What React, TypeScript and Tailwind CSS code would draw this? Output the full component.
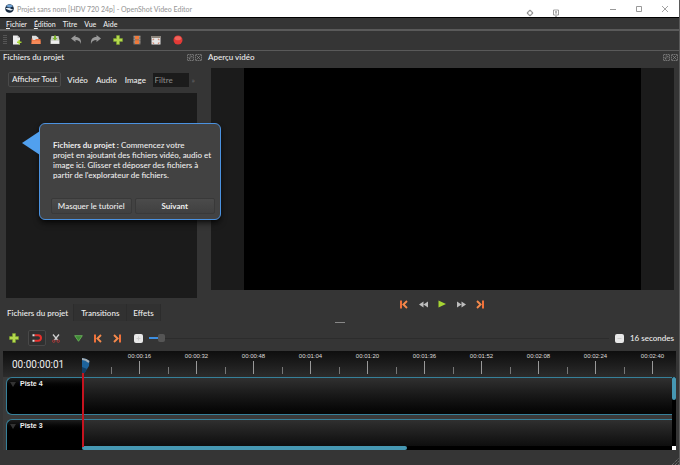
import { useState } from "react";
import type { ReactNode } from "react";

const times = [
  "00:00:16",
  "00:00:32",
  "00:00:48",
  "00:01:04",
  "00:01:20",
  "00:01:36",
  "00:01:52",
  "00:02:08",
  "00:02:24",
  "00:02:40",
];

const IconButton = ({ label, children }: { label: string; children: ReactNode }) => (
  <button type="button" aria-label={label} className="flex h-5 w-[19px] items-center justify-center">
    {children}
  </button>
);

const PlusIcon = () => (
  <svg className="size-[10px]" viewBox="0 0 10 10">
    <path d="M3.5 .5h3v3h3v3h-3v3h-3v-3h-3v-3h3z" fill="#b4d84c" stroke="#7ba52a" strokeWidth=".5" />
  </svg>
);

const StartIcon = () => (
  <svg className="h-[9px] w-2" viewBox="0 0 8 9">
    <path d="M0 .5h2v8H0z" fill="#f0713a" />
    <path d="M7 1 3.4 4.5 7 8" fill="none" stroke="#f58a4c" strokeWidth="1.9" />
  </svg>
);

const EndIcon = () => (
  <svg className="h-[9px] w-2" viewBox="0 0 8 9">
    <path d="M6 .5h2v8H6z" fill="#f0713a" />
    <path d="M1 1l3.6 3.5L1 8" fill="none" stroke="#f58a4c" strokeWidth="1.9" />
  </svg>
);

const DockButtons = () => (
  <div className="flex gap-px">
    <button type="button" aria-label="Détacher">
      <svg className="size-[7px]" viewBox="0 0 7 7" fill="none" stroke="#8c8c8c" strokeWidth=".7">
        <path d="M.5 .5h6v6h-6zM2 5l3-3M2.5 2H5v2.500M2 3v2h2" strokeDasharray="1.500 .5" />
      </svg>
    </button>
    <button type="button" aria-label="Fermer">
      <svg className="size-[7px]" viewBox="0 0 7 7" fill="none" stroke="#8c8c8c" strokeWidth=".7">
        <path d="M.5 .5h6v6h-6z" strokeDasharray="1.500 .5" />
        <path d="M1.500 1.500l4 4M5.500 1.500l-4 4" />
      </svg>
    </button>
  </div>
);

const TitleBar = () => (
  <header className="flex h-[17px] items-center bg-white pr-[10px] pl-[5px] text-[#999]">
    <svg className="size-[9px]" viewBox="0 0 9 9">
      <circle cx="4.500" cy="4.500" r="4.300" fill="#14283f" />
      <path d="M1 2.200A4.300 4.300 0 0 1 8 2.300L5 3.800z" fill="#6fa3d6" />
      <path d="M.3 4.600Q3 3 5.500 4.600T8.700 5.200Q6 7.200 3.500 6T.3 4.600" fill="#e9f1f8" />
    </svg>
    <h1 className="ml-[3px] text-[7px] leading-4">
      Projet sans nom [HDV 720 24p] - OpenShot Video Editor
    </h1>
    <div className="mt-2 mr-[49px] ml-auto flex gap-[18px]">
      <svg className="size-2" viewBox="0 0 8 8" fill="none" stroke="#777" strokeWidth=".9">
        <circle cx="4" cy="4" r="2.300" />
        <path d="M4 .8v1.400M4 5.800v1.400M.8 4h1.400M5.800 4h1.400" />
      </svg>
      <svg className="size-2" viewBox="0 0 8 8" fill="none" stroke="#888" strokeWidth=".8">
        <path d="M1.500 1h5v5h-5zM4 2v3M3 3h2M3 7.300h2" />
      </svg>
    </div>
    <div className="flex gap-[18px]">
      <button type="button" aria-label="Réduire">
        <svg className="size-2" viewBox="0 0 8 8" stroke="#999">
          <path d="M1 4.500h6" />
        </svg>
      </button>
      <button type="button" aria-label="Agrandir">
        <svg className="size-2" viewBox="0 0 8 8" fill="none" stroke="#999">
          <path d="M1.500 1.500h5v5h-5z" />
        </svg>
      </button>
      <button type="button" aria-label="Quitter">
        <svg className="size-2" viewBox="0 0 8 8" stroke="#999" strokeWidth=".9">
          <path d="M1 1l6 6M7 1 1 7" />
        </svg>
      </button>
    </div>
  </header>
);

const MenuBar = () => (
  <nav className="flex h-3 items-center gap-[7px] border-t border-black px-[6px] text-[7px]">
    <button type="button">
      <u>F</u>ichier
    </button>
    <button type="button">
      <u>É</u>dition
    </button>
    <button type="button">Titre</button>
    <button type="button">Vue</button>
    <button type="button">Aide</button>
  </nav>
);

const ToolBar = () => (
  <div className="flex h-[22px] items-center border-t-2 border-b border-[#5a5a5a] pb-[2px] pl-[3px]">
    <svg className="h-[10px] w-1" viewBox="0 0 4 10" stroke="#777" strokeDasharray="1 1">
      <path d="M1 0v10M3 0v10" />
    </svg>
    <IconButton label="Nouveau projet">
      <svg className="size-[10px]" viewBox="0 0 10 10">
        <path d="M1 .5h4.500L8 3v6.500H1z" fill="#eee" />
        <path d="M5.500 .5V3H8z" fill="#bbb" />
        <path d="M6.500 5v1.500H5V8h1.500v1.500H8V8h1.500V6.500H8V5z" fill="#a6d533" />
      </svg>
    </IconButton>
    <IconButton label="Ouvrir un projet">
      <svg className="size-[10px]" viewBox="0 0 10 10">
        <path d="M1 .8h4l2.500 2V8H1z" fill="#ddd" />
        <path d="M.5 9V3.500h1V5H4l1-1h4.500V9z" fill="#ef6c3b" />
        <path d="M1.200 5.500h8.300V9H.5z" fill="#f58a59" />
      </svg>
    </IconButton>
    <IconButton label="Enregistrer le projet">
      <svg className="size-[10px]" viewBox="0 0 10 10">
        <path d="M1.500 1h7l1 4.500V9h-9V5.500z" fill="#c9cdc4" />
        <path d="M1 5.800h8v2.700H1z" fill="#eee" />
        <path d="M4 .5h2V3h1.500L5 5.500 2.500 3H4z" fill="#7eb32c" />
      </svg>
    </IconButton>
    <div className="ml-[3px] flex">
      <IconButton label="Annuler">
        <svg className="h-[9px] w-[11px]" viewBox="0 0 11 9">
          <path d="M0 3.500 4.500 0v2C8.500 2 10.500 4.500 10 9 9 6 7.500 5 4.500 5v2z" fill="#9a9a9a" />
        </svg>
      </IconButton>
      <IconButton label="Rétablir">
        <svg className="h-[9px] w-[11px]" viewBox="0 0 11 9">
          <path d="M11 3.500 6.500 0v2C2.500 2 .5 4.500 1 9 2 6 3.500 5 6.500 5v2z" fill="#9a9a9a" />
        </svg>
      </IconButton>
    </div>
    <div className="ml-[3px] flex">
      <IconButton label="Importer des fichiers">
        <PlusIcon />
      </IconButton>
      <IconButton label="Choisir un profil">
        <svg className="size-[10px]" viewBox="0 0 10 10">
          <path d="M1.500 .5h7v9h-7z" fill="#77706a" />
          <path d="M3 1h4v3.500H3zM3 5.300h4v3.700H3z" fill="#f0793a" />
          <path d="M2.200 1v8M7.800 1v8" stroke="#ddd" strokeWidth=".6" strokeDasharray=".8 .8" />
        </svg>
      </IconButton>
      <IconButton label="Plein écran">
        <svg className="size-[10px]" viewBox="0 0 10 10">
          <path d="M.5 1h9v8.500h-9z" fill="#e6e6e6" />
          <path d="M.5 1h9v2h-9z" fill="#8d857b" />
          <path d="M2 5.300V4.200h1.200M6.800 4.200H8v1.100M8 7.200v1.200H6.800M3.200 8.400H2V7.200" fill="none" stroke="#c65b3b" strokeWidth=".7" />
        </svg>
      </IconButton>
    </div>
    <div className="ml-[3px]">
      <IconButton label="Exporter la vidéo">
        <svg className="size-[10px]" viewBox="0 0 10 10">
          <circle cx="5" cy="5" r="4.500" fill="#e33a36" />
          <ellipse cx="5" cy="3.200" rx="3.200" ry="2" fill="#f0645c" />
        </svg>
      </IconButton>
    </div>
  </div>
);

const Tutorial = ({ onHide }: { onHide: () => void }) => (
  <div
    role="dialog"
    aria-label="Tutoriel"
    className="absolute top-[72px] left-[39px] z-10 w-[182px] rounded-md border border-[#4b92e0] bg-[#424242] pt-4 pr-[5px] pb-[5px] pl-[11px] shadow-md shadow-black/60"
  >
    <svg className="absolute top-[7px] -left-[18px] h-6 w-[18px]" viewBox="0 0 18 24">
      <path d="M18 0v24L0 12z" fill="#51a0ee" />
    </svg>
    <p className="pl-[2px] leading-[10px]">
      <b>Fichiers du projet :</b> Commencez votre
      <br />
      projet en ajoutant des fichiers vidéo, audio et
      <br />
      image ici. Glisser et déposer des fichiers à
      <br />
      partir de l'explorateur de fichiers.
    </p>
    <div className="mt-[18px] flex gap-[3px]">
      <button
        type="button"
        onClick={onHide}
        className="h-4 flex-1 rounded-xs border border-[#393939] bg-linear-to-b from-[#4b4b4b] to-[#404040]"
      >
        Masquer le tutoriel
      </button>
      <button
        type="button"
        className="h-4 flex-1 rounded-xs border border-[#393939] bg-linear-to-b from-[#4b4b4b] to-[#404040] font-bold"
      >
        Suivant
      </button>
    </div>
  </div>
);

const ProjectFiles = () => {
  const [tutorial, setTutorial] = useState(true);

  return (
    <section className="relative flex w-[205px] shrink-0 flex-col">
      <div className="flex h-3 items-center justify-between pr-[3px] pl-[3px]">
        <h2>Fichiers du projet</h2>
        <DockButtons />
      </div>
      <div className="mt-2 flex h-[17px] items-center pl-2 whitespace-nowrap">
        <button type="button" className="h-[15px] rounded-xs border border-[#4a4a4a] px-[3px] leading-[13px]">
          Afficher Tout
        </button>
        <button type="button" className="ml-[6px]">
          Vidéo
        </button>
        <button type="button" className="ml-2">
          Audio
        </button>
        <button type="button" className="ml-2">
          Image
        </button>
        <input
          type="text"
          aria-label="Filtre"
          placeholder="Filtre"
          className="ml-auto h-[14px] w-9 bg-[#1b1b1b] px-[2px] placeholder:text-[#888]"
        />
        <span className="mr-[10px] ml-[3px] text-[#666]">»</span>
      </div>
      <div className="mt-[5px] mr-2 ml-[6px] flex-1 bg-[#1b1b1b]" />
      <div className="mt-[6px] flex h-[17px] pl-[2px]">
        <button type="button" className="border-r border-[#2c2c2c] px-[5px]">
          Fichiers du projet
        </button>
        <button type="button" className="border-r border-[#2c2c2c] bg-[#313131] px-[7px]">
          Transitions
        </button>
        <button type="button" className="border-r border-[#2c2c2c] bg-[#313131] px-[6px]">
          Effets
        </button>
      </div>
      {tutorial && <Tutorial onHide={() => setTutorial(false)} />}
    </section>
  );
};

const VideoPreview = () => (
  <section className="flex flex-1 flex-col">
    <div className="flex h-3 items-center justify-between pr-px pl-[3px]">
      <h2>Aperçu vidéo</h2>
      <DockButtons />
    </div>
    <div className="mt-[5px] mr-[5px] ml-[6px] flex-1 bg-[#1b1b1b] px-[33px]">
      <div className="h-full bg-black" />
    </div>
    <div className="flex h-[31px] items-center justify-center pb-[3px]">
      <IconButton label="Aller au début">
        <StartIcon />
      </IconButton>
      <IconButton label="Reculer">
        <svg className="h-[7px] w-[9px]" viewBox="0 0 9 7" fill="#bdbdbd">
          <path d="M4.500 .5v6L0 3.500zM9 .5v6L4.500 3.500z" />
        </svg>
      </IconButton>
      <IconButton label="Lecture">
        <svg className="size-2" viewBox="0 0 8 8" fill="#a6d533">
          <path d="M.5 .5 8 4 .5 7.500z" />
        </svg>
      </IconButton>
      <IconButton label="Avancer">
        <svg className="h-[7px] w-[9px]" viewBox="0 0 9 7" fill="#bdbdbd">
          <path d="M0 .5v6l4.500-3zM4.500 .5v6l4.500-3z" />
        </svg>
      </IconButton>
      <IconButton label="Aller à la fin">
        <EndIcon />
      </IconButton>
    </div>
  </section>
);

const TimelineTools = () => {
  const [zoom, setZoom] = useState(2);

  return (
    <div className="flex h-5 items-center pr-[5px] pl-1">
      <IconButton label="Ajouter une piste">
        <PlusIcon />
      </IconButton>
      <button
        type="button"
        aria-label="Aimanter"
        className="ml-[5px] flex h-4 w-[18px] items-center justify-center rounded-xs border border-[#484848] bg-[#303030]"
      >
        <svg className="h-2 w-[10px]" viewBox="0 0 10 8" fill="none" strokeWidth="2">
          <path d="M2.500 1.200h3.700a2.800 2.800 0 0 1 0 5.600H2.500" stroke="#e8302c" />
          <path d="M.5 1.200h2M.5 6.800h2" stroke="#ddd" />
        </svg>
      </button>
      <IconButton label="Rasoir">
        <svg className="h-[9px] w-2" viewBox="0 0 8 9" fill="none">
          <path d="M1 .5l4.500 5.500M7 .5 2.500 6" stroke="#d0d0d0" strokeWidth="1.300" />
          <circle cx="1.700" cy="7.200" r="1.200" stroke="#a93a3a" />
          <circle cx="6.300" cy="7.200" r="1.200" stroke="#a93a3a" />
        </svg>
      </IconButton>
      <div className="ml-1 flex">
        <IconButton label="Ajouter un marqueur">
          <svg className="h-[7px] w-[9px]" viewBox="0 0 9 7">
            <path d="M.7 .7h7.600L4.500 6.300z" fill="#3d8a35" stroke="#6bb15b" strokeWidth=".9" />
          </svg>
        </IconButton>
        <IconButton label="Marqueur précédent">
          <StartIcon />
        </IconButton>
        <IconButton label="Marqueur suivant">
          <EndIcon />
        </IconButton>
      </div>
      <button
        type="button"
        aria-label="Zoom avant"
        onClick={() => setZoom(zoom + 1)}
        className="ml-2 flex size-[9px] items-center justify-center rounded-xs bg-[#e8e8e8]"
      >
        <svg className="size-[7px]" viewBox="0 0 7 7" stroke="#ccc" fill="none">
          <path d="M3.500 1.500v4M1.500 3.500h4" />
        </svg>
      </button>
      <input
        type="range"
        aria-label="Zoom"
        min={0}
        max={100}
        value={zoom}
        onChange={(e) => setZoom(Number(e.target.value))}
        className="mx-[6px] h-2 min-w-0 flex-1 appearance-none bg-[linear-gradient(#3d8ee0,#3d8ee0),linear-gradient(#2c2c2c,#2c2c2c)] bg-[size:12px_2px,100%_1px] bg-[position:left_center,left_center] bg-no-repeat [&::-webkit-slider-thumb]:h-2 [&::-webkit-slider-thumb]:w-[7px] [&::-webkit-slider-thumb]:appearance-none [&::-webkit-slider-thumb]:rounded-xs [&::-webkit-slider-thumb]:bg-[#555]"
      />
      <button
        type="button"
        aria-label="Zoom arrière"
        onClick={() => setZoom(zoom - 1)}
        className="flex size-[9px] items-center justify-center rounded-xs bg-[#e8e8e8]"
      >
        <svg className="size-[7px]" viewBox="0 0 7 7" stroke="#ccc">
          <path d="M1.500 3.500h4" />
        </svg>
      </button>
      <span className="ml-[6px]">16 secondes</span>
    </div>
  );
};

const Track = ({ name }: { name: string }) => (
  <div className="flex h-[38px] shrink-0">
    <div className="flex w-[77px] items-start rounded-l-md border border-r-0 border-[#36809a] bg-linear-to-b from-[#1d1d1d] to-black to-35% pt-[2px] pl-[3px]">
      <svg className="mt-[2px] h-[5px] w-[6px]" viewBox="0 0 6 5" fill="#333">
        <path d="M0 0h6L3 5z" />
      </svg>
      <h3 className="ml-[4px] font-['Liberation_Sans',Arial,sans-serif] text-[7px] leading-[8px] font-bold">{name}</h3>
    </div>
    <div className="flex-1 border-y border-[#36809a] bg-linear-to-b from-[#303030] to-[#040404]" />
  </div>
);

const Timeline = () => (
  <section className="relative mx-[3px] mt-[3px] flex h-[99px] flex-col overflow-hidden bg-[#3a3a3a]">
    <div className="flex h-[26px] shrink-0 overflow-hidden bg-linear-to-b from-[#0e0e0e] to-[#2c2c2c] font-['Liberation_Sans',Arial,sans-serif]">
      <div className="w-[79px] shrink-0 pt-[3px] pl-[9px] font-[Roboto,sans-serif] text-[10px] leading-[22px] font-normal">
        00:00:00:01
      </div>
      <div className="flex pl-[29px]">
        {times.map((time) => (
          <div key={time} className="flex w-[57px] shrink-0 flex-col items-center">
            <span className="h-[10px] text-[6px] leading-[10px] text-[#ddd]">{time}</span>
            <div className="flex w-full items-end justify-between">
              <i className="h-[7px] w-px bg-[#777]" />
              <i className="h-[13px] w-px bg-[#999]" />
              <i className="w-px" />
            </div>
          </div>
        ))}
      </div>
    </div>
    <div className="flex flex-1 overflow-hidden">
      <div className="flex flex-1 flex-col gap-1 pl-[3px]">
        <Track name="Piste 4" />
        <Track name="Piste 3" />
      </div>
      <div className="flex w-[4px] flex-col justify-between bg-black">
        <div className="h-[23px] rounded-sm bg-[#4697b2]" />
        <div className="size-1 bg-white" />
      </div>
    </div>
    <div className="absolute right-1 bottom-0 left-[79px] h-1 bg-black">
      <div className="h-full w-[55%] rounded-sm bg-[#4697b2]" />
    </div>
    <svg className="absolute top-[7px] left-[79px] h-[90px] w-2" viewBox="0 0 8 90">
      <path d="M0 0Q5 .5 7.500 3L7 8 3 14 0 16z" fill="#1d639c" />
      <path d="M0 9 5 11 2 16H0z" fill="#123f66" />
      <path d="M0 0Q5 .5 7.500 3L6.500 5Q3.500 2 0 2z" fill="#a3adb5" />
      <path d="M0 15h2v74H0z" fill="#c5131f" />
    </svg>
  </section>
);

const App = () => {
  return (
    <div className="flex min-h-screen flex-col border-r border-[#5a5a5a] bg-[#353535] font-[Lato,sans-serif] text-[8px] leading-[10px] font-medium text-[#eee]">
      <TitleBar />
      <MenuBar />
      <ToolBar />
      <main className="flex flex-1">
        <ProjectFiles />
        <VideoPreview />
      </main>
      <div className="flex h-[7px] items-start justify-center pt-px">
        <div className="h-px w-[10px] bg-[#888]" />
      </div>
      <TimelineTools />
      <Timeline />
      <footer className="flex h-[15px] items-end justify-end">
        <svg className="size-[7px]" viewBox="0 0 7 7" stroke="#888" strokeDasharray="1 1">
          <path d="M0 7l7-7M3 7l4-4M6 7l1-1" />
        </svg>
      </footer>
    </div>
  );
};

export default App;
